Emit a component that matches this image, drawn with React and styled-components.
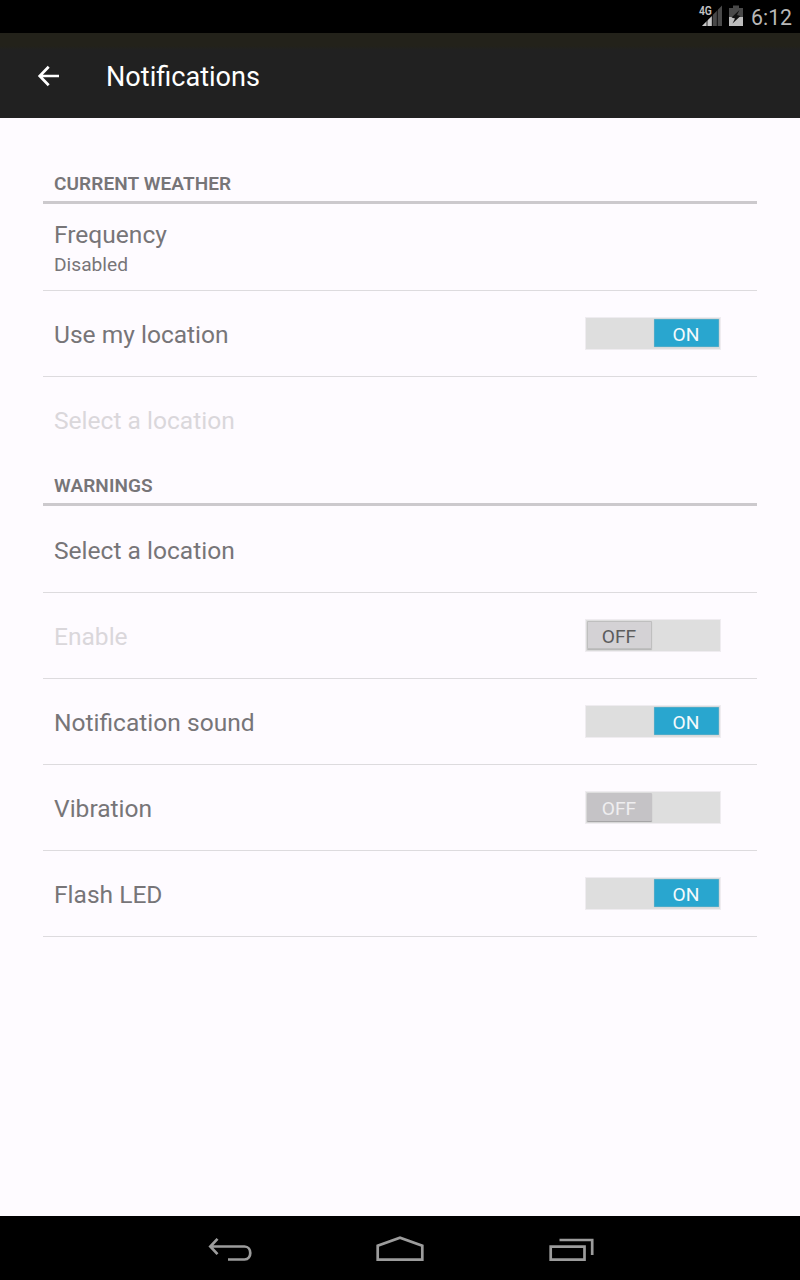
import React from "react";
import styled, { createGlobalStyle, css } from "styled-components";

const GlobalStyle = createGlobalStyle`
  * { box-sizing: border-box; }
  body { margin: 0; background: #fefbff; }
`;

const Screen = styled.div`
  display: flex;
  flex-direction: column;
  height: 1280px;
  width: 800px;
  background: #fefbff;
  font-family: Roboto, "Noto Sans", sans-serif;
  color: #777578;
  overflow: hidden;
`;

const StatusBar = styled.div`
  height: 33px;
  flex: none;
  background: #000;
  display: flex;
  justify-content: flex-end;
  align-items: flex-start;
`;

const StatusIcons = styled.svg`
  width: 54px;
  height: 33px;
  display: block;
`;

const Clock = styled.span`
  width: 50px;
  padding-left: 1px;
  font-size: 21.3px;
  line-height: 35px;
  color: #b8b8b8;
  white-space: nowrap;
`;

const AppBar = styled.header`
  height: 85px;
  flex: none;
  display: flex;
  align-items: center;
  padding: 0 0 0 36px;
  background: linear-gradient(#23221a 0, #23221a 13px, #212121 17px);
`;

const BackArrow = styled.svg`
  width: 24px;
  height: 24px;
  flex: none;
`;

const Title = styled.h1`
  margin: 2px 0 0 46px;
  font-size: 27.1px;
  line-height: 32px;
  font-weight: 400;
  color: #fff;
`;

const Content = styled.main`
  flex: 1;
  padding: 43px 43px 0;
`;

const SectionTitle = styled.h2`
  height: 43px;
  margin: 0 0 1px;
  padding: 11px 11px 0;
  border-bottom: 3px solid #ccc9cd;
  font-size: 19px;
  line-height: 24px;
  font-weight: 600;
  letter-spacing: 0.1px;
`;

const Row = styled.div`
  height: 86px;
  display: flex;
  align-items: center;
  justify-content: space-between;
  padding: 1px 36px 0 11px;
  border-bottom: 1px solid ${(p) => (p.$last ? "transparent" : "#dddbde")};
  color: ${(p) => (p.$muted ? "#dad7db" : "inherit")};
`;

const Label = styled.div`
  font-size: 24.55px;
  line-height: 32px;
  padding-top: 2px;
`;

const Summary = styled.div`
  font-size: 19.2px;
  line-height: 24px;
  padding: 2px 0 3px;
`;

const Track = styled.div`
  width: 136px;
  height: 33px;
  display: flex;
  justify-content: ${(p) => (p.$on ? "flex-end" : "flex-start")};
  padding: 1px;
  border: 1px solid #efecf0;
  background: #dedede;
  margin-bottom: 1px;
`;

const thumbs = {
  on: css`
    background: #29a6cf;
    color: #f4fafc;
    box-shadow: inset 0 0 0 0.5px #6fb0c4, 0 0 1px #8fb9c6;
  `,
  off: css`
    background: #c5c3c6;
    color: #efeef0;
    box-shadow: 0 1px 1px #a09fa1;
  `,
  disabled: css`
    background: #d4d2d5;
    color: #5c5c5c;
    box-shadow: inset 0 0 0 1px #bfbfbf, 0 1px 1px #b4b4b4;
  `,
};

const Thumb = styled.div`
  width: 65px;
  height: 28px;
  border-radius: 1px;
  font-size: 19.2px;
  line-height: 32px;
  padding-right: 1px;
  text-align: center;
  ${(p) => thumbs[p.$kind]}
`;

const NavBar = styled.nav`
  height: 64px;
  flex: none;
  display: flex;
  justify-content: center;
  background: #000;
`;

const NavIcon = styled.svg`
  width: 171px;
  height: 64px;
  fill: none;
  stroke: #9c9c9c;
  stroke-width: 2.7;
`;

function Toggle({ kind }) {
  return (
    <Track $on={kind === "on"}>
      <Thumb $kind={kind}>{kind === "on" ? "ON" : "OFF"}</Thumb>
    </Track>
  );
}

function Setting({ label, summary, toggle, muted, last }) {
  return (
    <Row $muted={muted} $last={last}>
      <div>
        <Label>{label}</Label>
        {summary && <Summary>{summary}</Summary>}
      </div>
      {toggle && <Toggle kind={toggle} />}
    </Row>
  );
}

export default function App() {
  return (
    <>
      <GlobalStyle />
      <Screen>
        <StatusBar>
          <StatusIcons viewBox="696 0 54 33">
            <path d="M702 26 L722 5.5 V26 Z" fill="#494949" />
            <path d="M702 26 L712 16 V26 Z" fill="#c8c8c8" />
            <path d="M707 15V27M712.3 10V27M717.3 5V27" stroke="#000" strokeWidth="0.8" />
            <path d="M698 4H712.5V15L711 16.5H698Z" fill="#000" />
            <text x="698.9" y="15" fontSize="12" fontWeight="600" fill="#c4c4c4" textLength="13" lengthAdjust="spacingAndGlyphs">4G</text>
            <path d="M729 8H733V5.5H739V8H743V17H729Z" fill="#494949" />
            <path d="M729 17H743V26H729Z" fill="#bdbdbd" />
            <path d="M739.5 10L731.5 17.5L735 18.5L732.5 23.5L740.5 16L737 15Z" fill="#111" />
          </StatusIcons>
          <Clock>6:12</Clock>
        </StatusBar>
        <AppBar>
          <BackArrow viewBox="0 0 24 24" fill="none" stroke="#fff" strokeWidth="2.7">
            <path d="M23 12H4M12.7 2.7L3.7 12L12.7 21.3" />
          </BackArrow>
          <Title>Notifications</Title>
        </AppBar>
        <Content>
          <SectionTitle>CURRENT WEATHER</SectionTitle>
          <Setting label="Frequency" summary="Disabled" />
          <Setting label="Use my location" toggle="on" />
          <Setting label="Select a location" muted last />
          <SectionTitle>WARNINGS</SectionTitle>
          <Setting label="Select a location" />
          <Setting label="Enable" toggle="disabled" muted />
          <Setting label="Notification sound" toggle="on" />
          <Setting label="Vibration" toggle="off" />
          <Setting label="Flash LED" toggle="on" />
        </Content>
        <NavBar>
          <NavIcon viewBox="144 1216 171 64">
            <path d="M210 1246.5H244.5C252.2 1246.5 252.2 1259.5 244.5 1259.5H228M217.5 1238.8L210.3 1246.5L217.5 1254.2" />
          </NavIcon>
          <NavIcon viewBox="315 1216 171 64">
            <path d="M377.7 1259.6V1245.7L400 1237.8L422.3 1245.7V1259.6Z" />
          </NavIcon>
          <NavIcon viewBox="486 1216 171 64">
            <path d="M550.7 1246.7H584.5V1259.6H550.7ZM559.5 1240H592.2V1255" />
          </NavIcon>
        </NavBar>
      </Screen>
    </>
  );
}
